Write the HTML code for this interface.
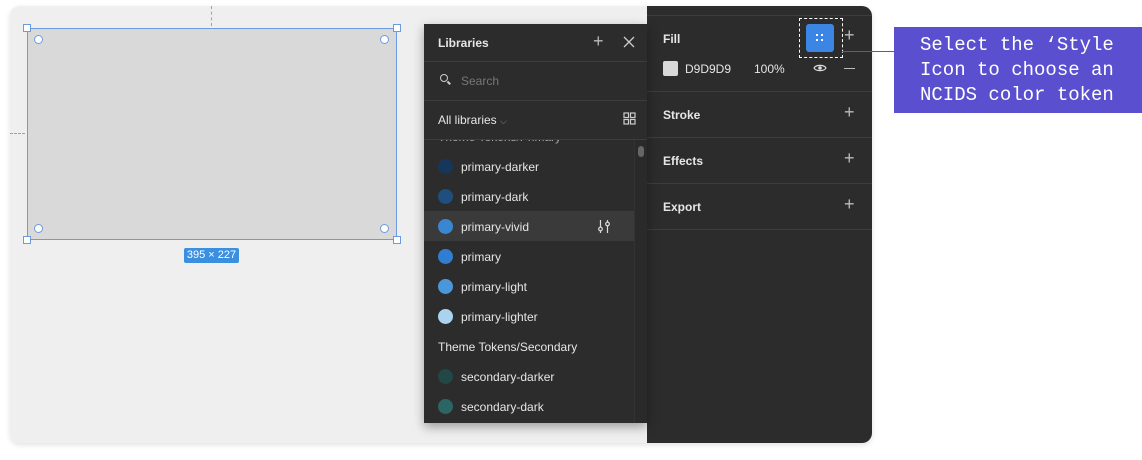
<!DOCTYPE html>
<html><head><meta charset="utf-8"><style>
*{margin:0;padding:0;box-sizing:border-box}
body{width:1142px;height:460px;background:#fff;position:relative;overflow:hidden;font-family:"Liberation Sans",sans-serif}
.abs{position:absolute}
.frame{left:10px;top:6px;width:862px;height:437px;background:#efefef;border-radius:10px;box-shadow:0 2px 6px rgba(0,0,0,.12)}
.right{left:647px;top:6px;width:225px;height:437px;background:#2c2c2c;border-radius:0 10px 10px 0}
.hl{height:1px;background:#3d3d3d}
.lib{left:424px;top:24px;width:223px;height:399px;background:#2c2c2c;box-shadow:0 4px 10px rgba(0,0,0,.35);overflow:hidden}
.t{color:#e6e6e6;font-size:12px;white-space:nowrap}
.b{font-weight:bold}
.dot{width:15px;height:15px;border-radius:50%}
.plus{color:#bbb;font-size:18px;font-weight:300}
</style></head><body>
<div class="abs frame"></div>
<div class="abs" style="left:211px;top:6px;width:0;height:20px;border-left:1px dashed #8aa"></div>
<div class="abs" style="left:10px;top:133px;width:15px;height:0;border-top:1px dashed #8aa"></div>
<div class="abs" style="left:27px;top:28px;width:370px;height:212px;background:#d9d9d9;border:1px solid #6b9be0"></div>
<div class="abs" style="left:23px;top:24px;width:8px;height:8px;background:#fff;border:1px solid #6b9be0"></div>
<div class="abs" style="left:393px;top:24px;width:8px;height:8px;background:#fff;border:1px solid #6b9be0"></div>
<div class="abs" style="left:23px;top:236px;width:8px;height:8px;background:#fff;border:1px solid #6b9be0"></div>
<div class="abs" style="left:393px;top:236px;width:8px;height:8px;background:#fff;border:1px solid #6b9be0"></div>
<div class="abs" style="left:34px;top:35px;width:9px;height:9px;border-radius:50%;background:#fff;border:1px solid #6b9be0"></div>
<div class="abs" style="left:380px;top:35px;width:9px;height:9px;border-radius:50%;background:#fff;border:1px solid #6b9be0"></div>
<div class="abs" style="left:34px;top:224px;width:9px;height:9px;border-radius:50%;background:#fff;border:1px solid #6b9be0"></div>
<div class="abs" style="left:380px;top:224px;width:9px;height:9px;border-radius:50%;background:#fff;border:1px solid #6b9be0"></div>
<div class="abs" style="left:184px;top:248px;width:55px;height:15px;background:#3b8fe0;border-radius:2px;color:#fff;font-size:11px;text-align:center;line-height:15px">395 × 227</div>

<div class="abs right">
 <div class="abs hl" style="left:0;top:9px;width:225px"></div>
 <div class="abs t b" style="left:16px;top:26px">Fill</div>
 <div class="abs" style="left:152px;top:12px;width:44px;height:40px;border:1.5px dashed #fff"></div>
 <div class="abs" style="left:159px;top:18px;width:28px;height:28px;background:#3b86e4;border-radius:3px"></div>
 <div class="abs" style="left:169px;top:28px;width:2px;height:2px;background:#fff;box-shadow:5px 0 #fff,0 5px #fff,5px 5px #fff"></div>
 <div class="abs plus" style="left:197px;top:19px">+</div>
 <div class="abs" style="left:16px;top:55px;width:15px;height:15px;background:#d9d9d9;border-radius:2px"></div>
 <div class="abs t" style="left:38px;top:56px">D9D9D9</div>
 <div class="abs t" style="left:107px;top:56px">100%</div>
 <svg class="abs" style="left:166px;top:57px" width="14" height="10" viewBox="0 0 14 10"><path d="M1 5C3 1.5 11 1.5 13 5C11 8.5 3 8.5 1 5Z" fill="none" stroke="#ddd" stroke-width="1.2"/><circle cx="7" cy="5" r="1.8" fill="#ddd"/></svg>
 <div class="abs" style="left:197px;top:62px;width:11px;height:1px;background:#bbb"></div>
 <div class="abs hl" style="left:0;top:85px;width:225px"></div>
 <div class="abs t b" style="left:16px;top:102px">Stroke</div><div class="abs plus" style="left:197px;top:96px">+</div>
 <div class="abs hl" style="left:0;top:131px;width:225px"></div>
 <div class="abs t b" style="left:16px;top:148px">Effects</div><div class="abs plus" style="left:197px;top:142px">+</div>
 <div class="abs hl" style="left:0;top:177px;width:225px"></div>
 <div class="abs t b" style="left:16px;top:194px">Export</div><div class="abs plus" style="left:197px;top:188px">+</div>
 <div class="abs hl" style="left:0;top:223px;width:225px"></div>
</div>
<div class="abs" style="left:842px;top:51px;width:52px;height:1px;background:#5a4fcf"></div>
<div class="abs" style="left:894px;top:27px;width:248px;height:86px;background:#5a4fcf;color:#fff;font-family:'Liberation Mono',monospace;font-size:19px;line-height:25px;padding:6px 0 0 26px;white-space:pre">Select the ‘Style
Icon to choose an
NCIDS color token</div>

<div class="abs lib">
 <div class="abs t b" style="left:14px;top:12px">Libraries</div>
 <div class="abs plus" style="left:169px;top:7px">+</div>
 <svg class="abs" style="left:199px;top:12px" width="12" height="12" viewBox="0 0 12 12"><path d="M1 1L11 11M11 1L1 11" stroke="#ccc" stroke-width="1.3"/></svg>
 <div class="abs hl" style="left:0;top:37px;width:223px"></div>
 <div class="abs" style="left:16px;top:50px;width:8px;height:8px;border:1.5px solid #ccc;border-radius:50%"></div>
 <div class="abs" style="left:23px;top:58px;width:4px;height:1.5px;background:#ccc;transform:rotate(45deg)"></div>
 <div class="abs t" style="left:37px;top:50px;color:#777">Search</div>
 <div class="abs hl" style="left:0;top:76px;width:223px"></div>
 <div class="abs t" style="left:14px;top:89px">All libraries <span style="color:#888;font-size:9px">⌵</span></div>
 <svg class="abs" style="left:199px;top:88px" width="13" height="13" viewBox="0 0 13 13"><g fill="none" stroke="#ccc" stroke-width="1.2"><rect x="1" y="1" width="4.5" height="4.5"/><rect x="7.5" y="1" width="4.5" height="4.5"/><rect x="1" y="7.5" width="4.5" height="4.5"/><rect x="7.5" y="7.5" width="4.5" height="4.5"/></g></svg>
 <div class="abs hl" style="left:0;top:115px;width:223px"></div>
 <div class="abs t" style="left:14px;top:106px;color:#aaa;clip-path:inset(10px 0 0 0)">Theme Tokens/Primary</div>
 <div class="abs" style="left:210px;top:116px;width:13px;height:283px;background:#2a2a2a;border-left:1px solid #333"></div>
 <div class="abs" style="left:214px;top:122px;width:6px;height:11px;border-radius:3px;background:#666"></div>
 <div class="abs" style="left:0;top:187px;width:210px;height:30px;background:#3a3a3a"></div>
 <div class="abs dot" style="left:14px;top:135px;background:#16365a"></div><div class="abs t" style="left:37px;top:136px">primary-darker</div>
 <div class="abs dot" style="left:14px;top:165px;background:#1e4f7e"></div><div class="abs t" style="left:37px;top:166px">primary-dark</div>
 <div class="abs dot" style="left:14px;top:195px;background:#3a86d2"></div><div class="abs t" style="left:37px;top:196px">primary-vivid</div>
 <svg class="abs" style="left:173px;top:195px" width="14" height="15" viewBox="0 0 14 15"><g fill="none" stroke="#ddd" stroke-width="1.2"><path d="M3.5 1V8M3.5 12V14M10.5 1V3M10.5 7V14"/><circle cx="3.5" cy="10" r="1.8"/><circle cx="10.5" cy="5" r="1.8"/></g></svg>
 <div class="abs dot" style="left:14px;top:225px;background:#2f7ed2"></div><div class="abs t" style="left:37px;top:226px">primary</div>
 <div class="abs dot" style="left:14px;top:255px;background:#4a98db"></div><div class="abs t" style="left:37px;top:256px">primary-light</div>
 <div class="abs dot" style="left:14px;top:285px;background:#a9d3ef"></div><div class="abs t" style="left:37px;top:286px">primary-lighter</div>
 <div class="abs t" style="left:14px;top:316px">Theme Tokens/Secondary</div>
 <div class="abs dot" style="left:14px;top:345px;background:#214845"></div><div class="abs t" style="left:37px;top:346px">secondary-darker</div>
 <div class="abs dot" style="left:14px;top:375px;background:#2b6664"></div><div class="abs t" style="left:37px;top:376px">secondary-dark</div>
</div>
</body></html>
